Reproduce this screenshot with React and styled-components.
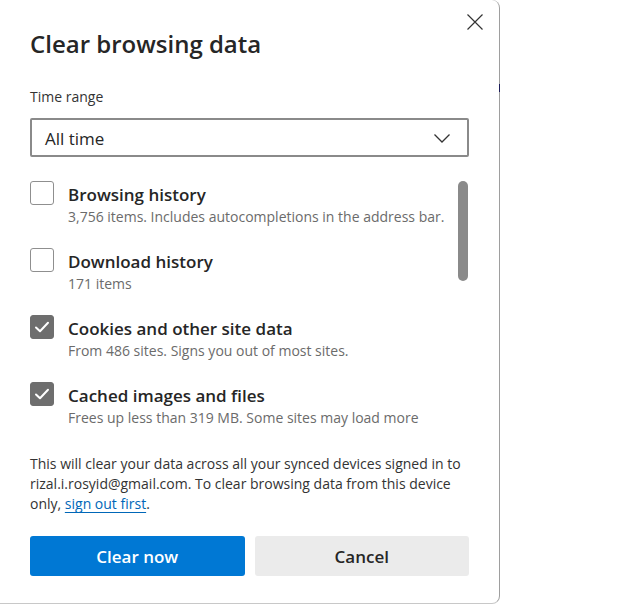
import React from 'react'
import styled, { createGlobalStyle } from 'styled-components'

const GlobalStyle = createGlobalStyle`
  html, body {
    margin: 0;
    padding: 0;
    background: #ffffff;
  }
  body {
    font-family: "Open Sans", "Noto Sans", "Liberation Sans", sans-serif;
    color: #242424;
  }
`

const Page = styled.div`
  width: 635px;
  height: 605px;
  background: #ffffff;
  display: flex;
  align-items: flex-start;
`

const Dialog = styled.section`
  position: relative;
  width: 500px;
  height: 604px;
  box-sizing: border-box;
  background: #ffffff;
  border-right: 1px solid #9e9e9e;
  border-bottom: 1px solid #c8c8c8;
  border-radius: 0 8px 8px 0;
  padding: 0 30px;
  display: flex;
  flex-direction: column;

  &::after {
    content: '';
    position: absolute;
    right: -1px;
    top: 84px;
    width: 1px;
    height: 8px;
    background: #1c1c5a;
  }
`

const Header = styled.header`
  display: flex;
  justify-content: space-between;
  align-items: flex-start;
`

const Title = styled.h1`
  margin: 28px 0 0;
  font-size: 24px;
  line-height: 32px;
  font-weight: 600;
  color: #262626;
`

const CloseButton = styled.button`
  width: 30px;
  height: 30px;
  margin: 7px -21px 0 0;
  padding: 0;
  border: 0;
  background: transparent;
  display: flex;
  align-items: center;
  justify-content: center;
  color: #333333;
`

const FieldLabel = styled.label`
  display: block;
  margin-top: 27px;
  font-size: 14px;
  line-height: 20px;
  color: #333333;
`

const Select = styled.div`
  margin-top: 11px;
  height: 39px;
  box-sizing: border-box;
  border: 2px solid #8a8a8a;
  border-radius: 2px;
  display: flex;
  align-items: center;
  justify-content: space-between;
  padding: 2px 17px 0 13px;
  font-size: 17px;
  color: #262626;
`

const ScrollArea = styled.div`
  margin-top: 24px;
  height: 250px;
  overflow: hidden;
  display: flex;
  justify-content: space-between;
`

const ItemList = styled.ul`
  list-style: none;
  margin: 0;
  padding: 0;
  display: flex;
  flex-direction: column;
  gap: 21px;
`

const Item = styled.li`
  display: flex;
  align-items: flex-start;
  gap: 14px;
`

const Box = styled.span`
  flex: none;
  width: 24px;
  height: 24px;
  box-sizing: border-box;
  border-radius: 3px;
  border: 1px solid ${({ checked }) => (checked ? '#6e6e6e' : '#8f8f8f')};
  background: ${({ checked }) => (checked ? '#6e6e6e' : '#ffffff')};
  display: flex;
  align-items: center;
  justify-content: center;
`

const ItemText = styled.div`
  display: flex;
  flex-direction: column;
  padding-top: 2px;
`

const ItemTitle = styled.span`
  font-size: 17px;
  line-height: 24px;
  font-weight: 600;
  color: #262626;
`

const ItemDesc = styled.span`
  font-size: 14px;
  line-height: 20px;
  color: #6b6b6b;
`

const Track = styled.div`
  width: 10px;
  margin-right: 1px;
`

const Thumb = styled.div`
  width: 10px;
  height: 100px;
  border-radius: 5px;
  background: #8a8a8a;
`

const Notice = styled.p`
  margin: 23px 0 0;
  font-size: 14px;
  line-height: 20px;
  color: #333333;
`

const Link = styled.a`
  color: #0067b8;
  text-decoration: underline;
  text-underline-offset: 3px;
`

const Actions = styled.div`
  margin-top: 22px;
  display: grid;
  grid-template-columns: 1fr 1fr;
  gap: 10px;
`

const Button = styled.button`
  height: 40px;
  border: 0;
  border-radius: 3px;
  font-family: inherit;
  font-size: 17px;
  font-weight: 600;
  background: ${({ primary }) => (primary ? '#0078d4' : '#ebebeb')};
  color: ${({ primary }) => (primary ? '#ffffff' : '#262626')};
`

const items = [
  { title: 'Browsing history', desc: '3,756 items. Includes autocompletions in the address bar.', checked: false },
  { title: 'Download history', desc: '171 items', checked: false },
  { title: 'Cookies and other site data', desc: 'From 486 sites. Signs you out of most sites.', checked: true },
  { title: 'Cached images and files', desc: 'Frees up less than 319 MB. Some sites may load more', checked: true }
]

const Check = () => (
  <svg width="18" height="18" viewBox="0 0 18 18" fill="none">
    <path d="M3 9.5 L7 13.3 L15 4.8" stroke="#ffffff" strokeWidth="2" strokeLinecap="round" strokeLinejoin="round" />
  </svg>
)

const App = () => (
  <Page>
    <GlobalStyle />
    <Dialog>
      <Header>
        <Title>Clear browsing data</Title>
        <CloseButton aria-label="Close">
          <svg width="16" height="16" viewBox="0 0 16 16">
            <path d="M0.5 0.5 L15.5 15.5 M15.5 0.5 L0.5 15.5" stroke="#333333" strokeWidth="1.2" />
          </svg>
        </CloseButton>
      </Header>
      <FieldLabel>Time range</FieldLabel>
      <Select>
        <span>All time</span>
        <svg width="16" height="9" viewBox="0 0 16 9">
          <path d="M0.5 0.5 L8 8 L15.5 0.5" stroke="#333333" strokeWidth="1.3" fill="none" />
        </svg>
      </Select>
      <ScrollArea>
        <ItemList>
          {items.map((item) => (
            <Item key={item.title}>
              <Box checked={item.checked}>{item.checked && <Check />}</Box>
              <ItemText>
                <ItemTitle>{item.title}</ItemTitle>
                <ItemDesc>{item.desc}</ItemDesc>
              </ItemText>
            </Item>
          ))}
        </ItemList>
        <Track>
          <Thumb />
        </Track>
      </ScrollArea>
      <Notice>
        This will clear your data across all your synced devices signed in to rizal.i.rosyid@gmail.com. To clear browsing data from this device only, <Link href="#">sign out first</Link>.
      </Notice>
      <Actions>
        <Button primary>Clear now</Button>
        <Button>Cancel</Button>
      </Actions>
    </Dialog>
  </Page>
)

export default App
